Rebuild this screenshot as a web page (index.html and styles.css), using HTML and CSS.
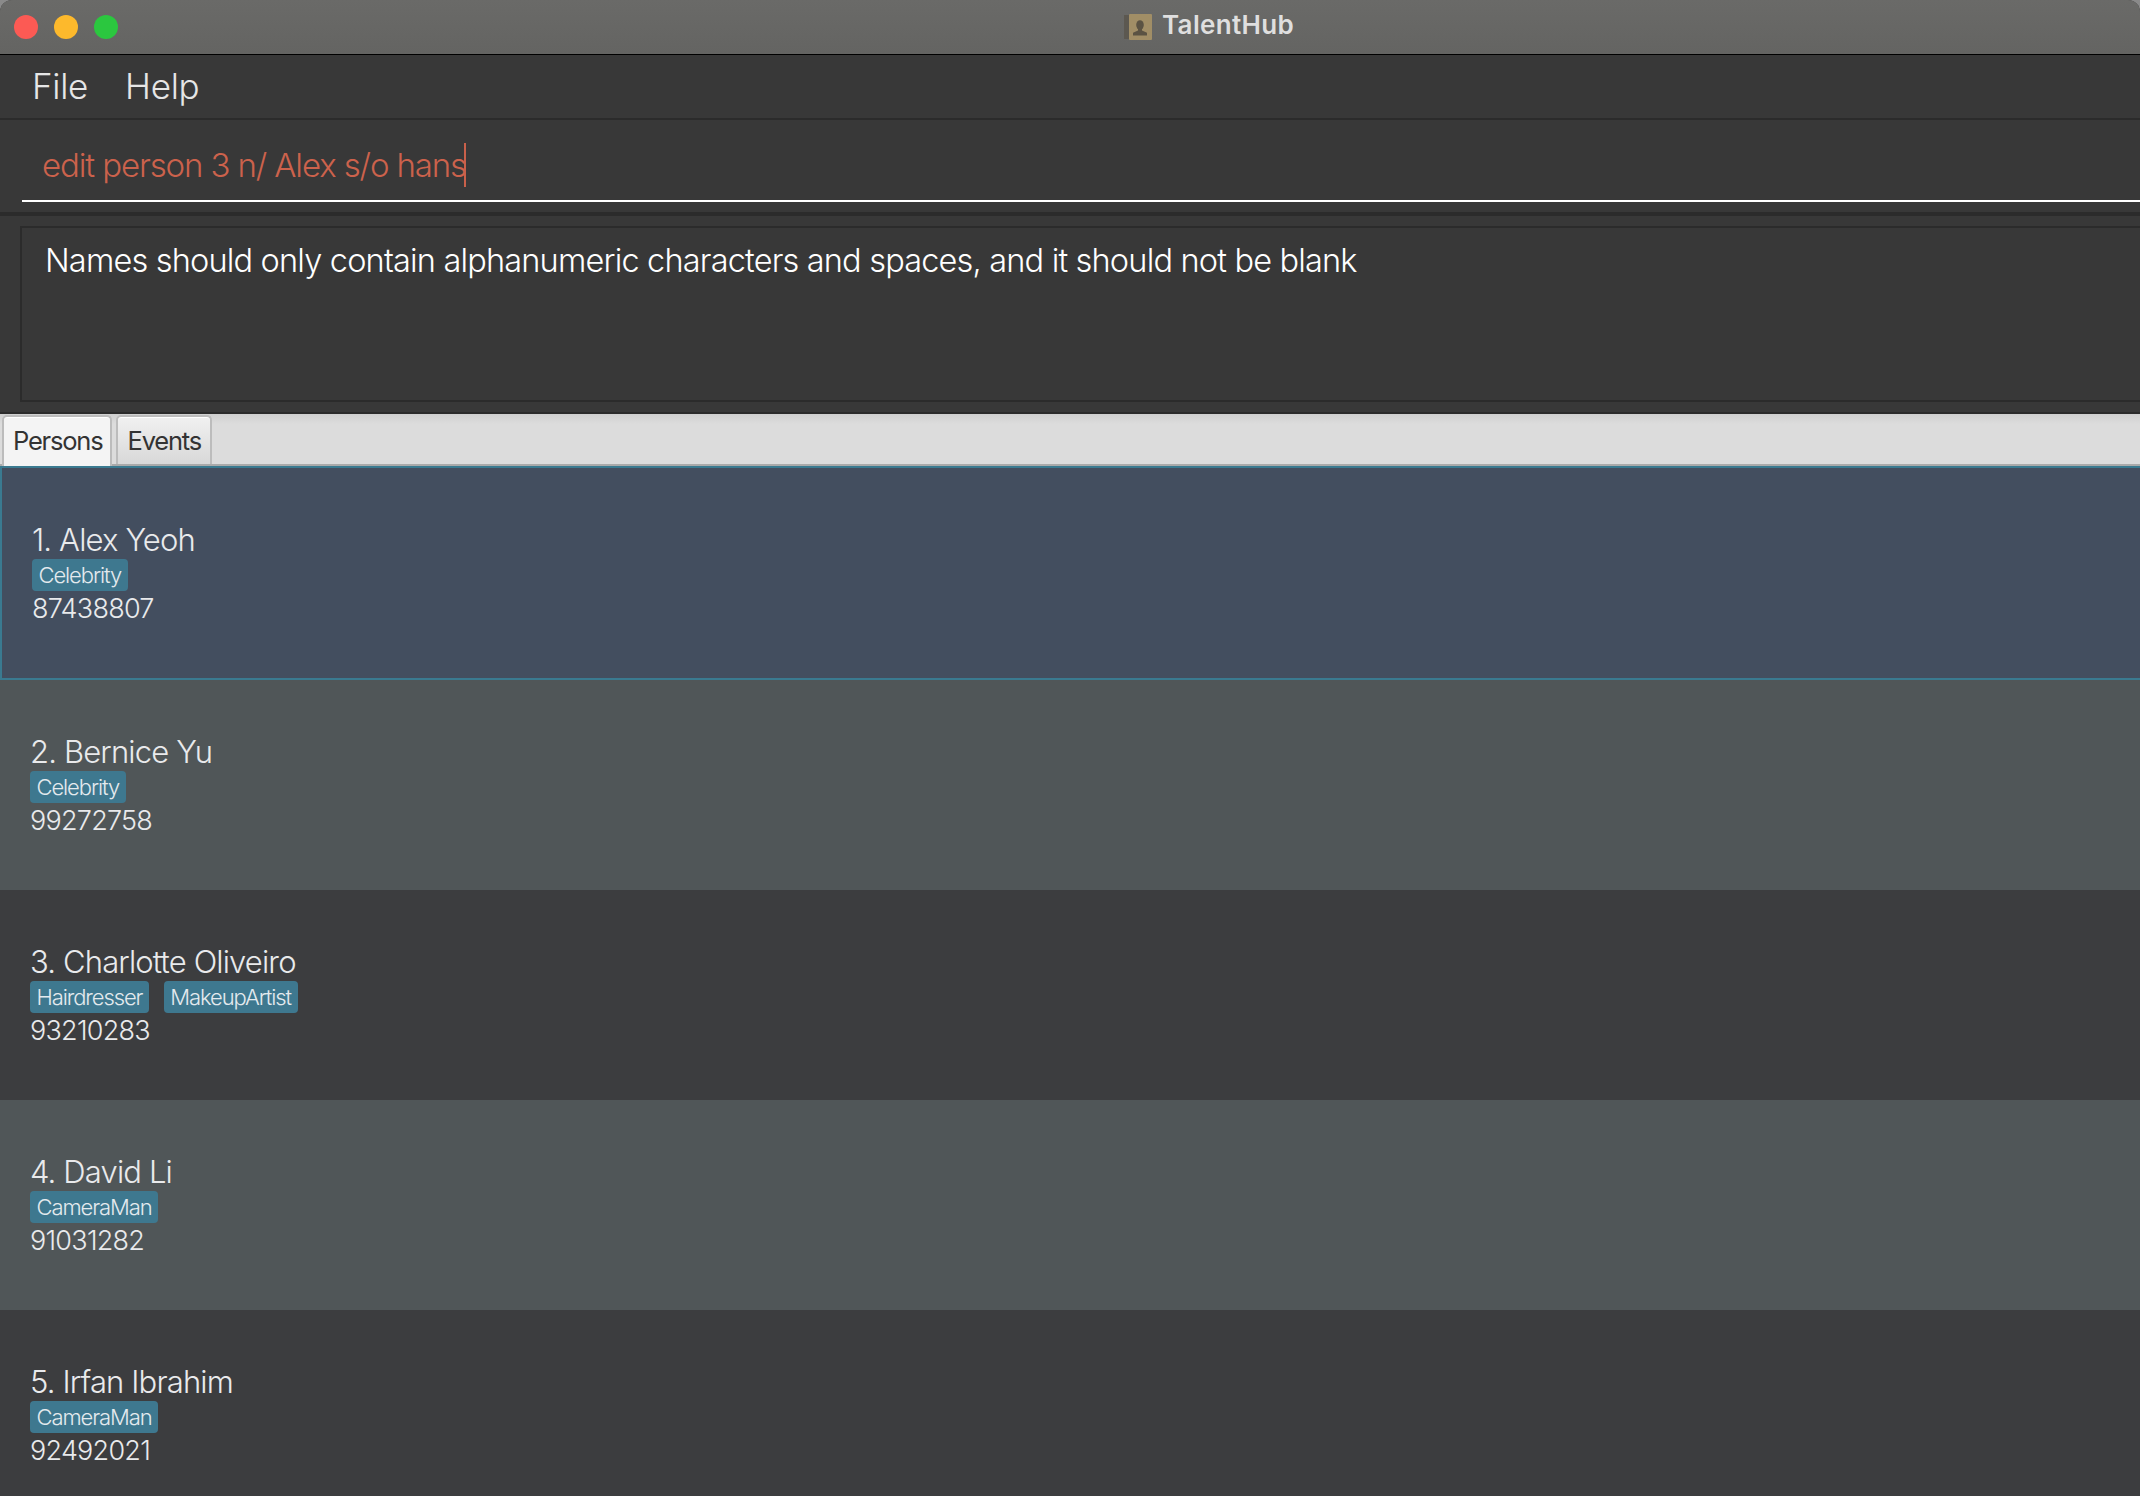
FILE: index.html
```html
<!DOCTYPE html>
<html lang="en">
<head>
<meta charset="utf-8">
<title>TalentHub</title>
<link rel="stylesheet" href="styles.css">
</head>
<body>
<div class="window">
  <header class="titlebar">
    <div class="lights">
      <span class="light red"></span>
      <span class="light yellow"></span>
      <span class="light green"></span>
    </div>
    <div class="title">
      <svg class="app-icon" width="28" height="26" viewBox="0 0 28 26" aria-hidden="true">
        <rect x="0" y="1" width="6" height="24" fill="#5c5850"/>
        <rect x="5" y="0" width="23" height="26" rx="1" fill="#a18e66"/>
        <ellipse cx="16" cy="11" rx="3.8" ry="4.8" fill="#5b5343"/>
        <path d="M14 14h4v2.6l5 2.2v2.7H9v-2.7l5-2.2z" fill="#5b5343"/>
      </svg>
      <span class="title-text">TalentHub</span>
    </div>
  </header>
  <nav class="menu">
    <span class="menu-item">File</span>
    <span class="menu-item">Help</span>
  </nav>
  <section class="command">
    <div class="command-field">
      <span class="command-text">edit person 3 n/ Alex s/o hans</span><span class="caret"></span>
    </div>
  </section>
  <section class="result">
    <div class="result-box">Names should only contain alphanumeric characters and spaces, and it should not be blank</div>
  </section>
  <div class="tabs">
    <span class="tab active">Persons</span>
    <span class="tab">Events</span>
  </div>
  <main class="list">
    <article class="card selected">
      <div class="name">1. Alex Yeoh</div>
      <div class="tags"><span class="tag">Celebrity</span></div>
      <div class="phone">87438807</div>
    </article>
    <article class="card even">
      <div class="name">2. Bernice Yu</div>
      <div class="tags"><span class="tag">Celebrity</span></div>
      <div class="phone">99272758</div>
    </article>
    <article class="card odd">
      <div class="name">3. Charlotte Oliveiro</div>
      <div class="tags"><span class="tag">Hairdresser</span><span class="tag">MakeupArtist</span></div>
      <div class="phone">93210283</div>
    </article>
    <article class="card even">
      <div class="name">4. David Li</div>
      <div class="tags"><span class="tag">CameraMan</span></div>
      <div class="phone">91031282</div>
    </article>
    <article class="card odd">
      <div class="name">5. Irfan Ibrahim</div>
      <div class="tags"><span class="tag">CameraMan</span></div>
      <div class="phone">92492021</div>
    </article>
  </main>
</div>
</body>
</html>
```
FILE: styles.css
```css
* { box-sizing: border-box; }
html, body { margin: 0; height: 100%; overflow: hidden; }
body { background: #8a8a8a; font-family: Inter, "Noto Sans", sans-serif; }
.window { width: 2140px; height: 1496px; background: #383838; border-radius: 12px 12px 0 0; overflow: hidden; display: flex; flex-direction: column; }

.titlebar { height: 55px; flex: none; background: linear-gradient(#6a6a68, #646462); border-bottom: 1.5px solid #000; display: flex; align-items: center; padding-left: 14px; }
.lights { display: flex; gap: 16px; }
.light { width: 24px; height: 24px; border-radius: 50%; }
.red { background: #fc5a54; }
.yellow { background: #fdb92c; }
.green { background: #2bc73f; }
.title { display: flex; align-items: center; gap: 10px; margin-left: 1006px; }
.title-text { color: #dfdfdf; font-size: 26px; line-height: 26px; font-weight: 600; letter-spacing: 0.35px; margin-top: -4px; }

.menu { height: 65px; flex: none; border-bottom: 2px solid #2b2b2b; display: flex; align-items: center; gap: 37px; padding: 0 0 2px 32px; }
.menu-item { color: #e6e6e6; font-size: 35px; font-weight: 300; letter-spacing: -0.3px; }

.command { height: 96px; flex: none; border-bottom: 4px solid #2b2b2b; padding: 0 0 10px 22px; display: flex; align-items: flex-end; }
.command-field { flex: 1; height: 82px; border-bottom: 2px solid #fff; padding: 10px 0 0 20px; display: flex; align-items: center; }
.command-text { color: #cc624c; font-size: 33px; font-weight: 300; letter-spacing: -1.13px; }
.caret { width: 2px; height: 44px; margin-left: -2px; background: #c9604a; }

.result { height: 198px; flex: none; border-bottom: 2px solid #2b2b2b; padding: 10px 0 10px 20px; display: flex; }
.result-box { flex: 1; border: 2px solid #2b2b2b; border-right: 0; padding: 13px 0 0 23px; color: #fff; font-size: 32.5px; font-weight: 300; letter-spacing: -0.82px; }

.tabs { height: 52px; flex: none; background: linear-gradient(#cfcfcf, #dcdcdc 10px); border-bottom: 2px solid #aaa; padding: 1px 0 0 2px; display: flex; gap: 4px; }
.tab { height: 49px; padding: 0 9px 0 10px; display: flex; align-items: center; color: #333; font-size: 25.5px; font-weight: 400; letter-spacing: -1.2px; background: linear-gradient(#f1f1f1, #d8d8d8); border: 2px solid #bcbcbc; border-bottom: 0; border-radius: 5px 5px 0 0; box-shadow: inset 0 1px #fff; }
.tab.active { background: #f4f4f4; height: 51px; margin-bottom: -2px; padding: 0 7px 2px 9px; }

.list { flex: 1; min-height: 0; }
.card { height: 210px; padding: 54px 0 0 30px; }
.selected { height: 214px; background: #434e5f; border: 2px solid #3a7a90; border-right: 0; padding: 54px 0 0 30px; }
.even { background: #505658; }
.odd { background: #3c3d3f; }
.name { color: #e9eaec; font-size: 31px; font-weight: 300; line-height: 36px; letter-spacing: -0.85px; }
.tags { display: flex; gap: 15px; margin-top: 1px; }
.tag { height: 32px; padding: 0 6.5px; display: flex; align-items: center; background: #3e788f; border-radius: 4px; color: #e4eaee; font-size: 22px; font-weight: 300; letter-spacing: -1.1px; }
.phone { color: #e9eaec; font-size: 27px; font-weight: 300; line-height: 34px; letter-spacing: -0.75px; margin-top: 1px; }
```
